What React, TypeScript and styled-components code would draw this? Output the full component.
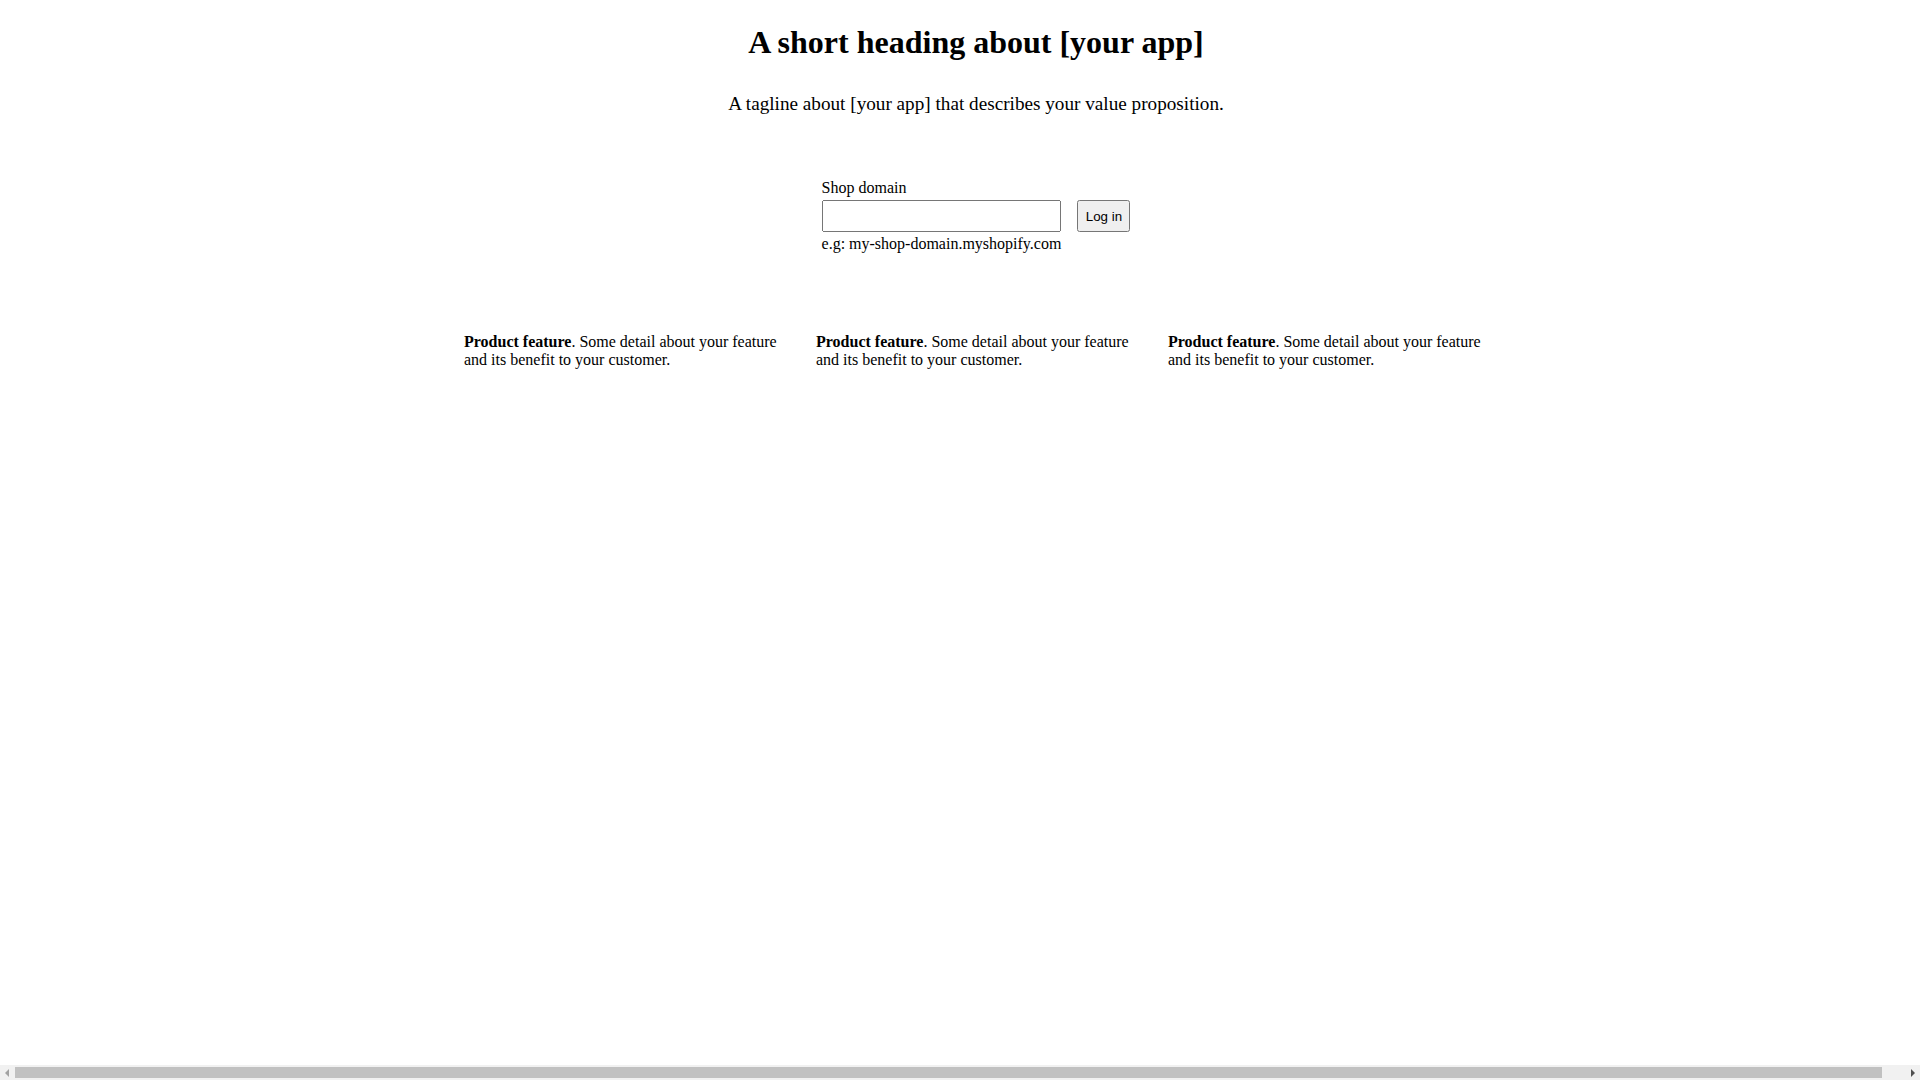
import * as React from 'react';
import styled, { createGlobalStyle } from 'styled-components';

const GlobalStyle = createGlobalStyle`
  body {
    margin: 8px;
    font-family: "Liberation Serif", "Times New Roman", serif;
    font-size: 16px;
    color: #000;
    background: #fff;
  }
`;

const features = [
  'Some detail about your feature and its benefit to your customer.',
  'Some detail about your feature and its benefit to your customer.',
  'Some detail about your feature and its benefit to your customer.',
];

export default function App() {
  return (
    <>
      <GlobalStyle />
      <Index>
        <Content>
          <Heading>A short heading about [your app]</Heading>
          <Tagline>A tagline about [your app] that describes your value proposition.</Tagline>
          <LoginForm method="post" action="/auth/login" onSubmit={(e) => e.preventDefault()}>
            <Label>
              <span>Shop domain</span>
              <Input type="text" name="shop" />
              <span>e.g: my-shop-domain.myshopify.com</span>
            </Label>
            <Button type="submit">Log in</Button>
          </LoginForm>
          <FeatureList>
            {features.map((text, i) => (
              <Feature key={i}>
                <strong>Product feature</strong>. {text}
              </Feature>
            ))}
          </FeatureList>
        </Content>
      </Index>
      {/* horizontal scrollbar as seen in the screenshot */}
      <ScrollBar aria-hidden>
        <Arrow $dir="left" />
        <Track>
          <Thumb />
        </Track>
        <Arrow $dir="right" />
      </ScrollBar>
    </>
  );
}

const Index = styled.div`
  display: flex;
  align-items: center;
  justify-content: center;
  width: 100%;
  padding: 1rem;
  text-align: center;
`;

const Content = styled.div`
  display: grid;
  gap: 2rem;
`;

const Heading = styled.h1`
  margin: 0;
  padding: 0;
  font-size: 32px;
  font-weight: bold;
`;

const Tagline = styled.p`
  margin: 0;
  padding: 0 0 2rem;
  font-size: 1.2rem;
`;

const LoginForm = styled.form`
  display: flex;
  align-items: center;
  justify-content: flex-start;
  margin: 0 auto;
  gap: 1rem;
`;

const Label = styled.label`
  display: grid;
  gap: 0.2rem;
  max-width: 20rem;
  text-align: left;
  font-size: 1rem;
`;

const Input = styled.input`
  font: 13.333px "Liberation Sans", Arial, sans-serif;
  padding: 0.4rem;
`;

const Button = styled.button`
  font: 13.333px "Liberation Sans", Arial, sans-serif;
  padding: 0.4rem;
`;

const FeatureList = styled.ul`
  list-style: none;
  margin: 0;
  padding: 3rem 0 0;
  display: flex;
  gap: 2rem;
`;

const Feature = styled.li`
  max-width: 20rem;
  text-align: left;
`;

const ScrollBar = styled.div`
  position: fixed;
  left: 0;
  right: 0;
  bottom: 0;
  height: 15px;
  display: flex;
  align-items: center;
  background: #f1f1f1;
`;

const Track = styled.div`
  flex: 1;
  height: 100%;
  padding: 2px 23px 2px 0;
  box-sizing: border-box;
`;

const Thumb = styled.div`
  height: 100%;
  background: #c1c1c1;
`;

const Arrow = styled.div<{ $dir: 'left' | 'right' }>`
  width: 15px;
  height: 15px;
  position: relative;
  flex: none;

  &::after {
    content: '';
    position: absolute;
    top: 4px;
    ${(p) => (p.$dir === 'left' ? 'left: 5px;' : 'left: 6px;')}
    border-top: 4px solid transparent;
    border-bottom: 4px solid transparent;
    ${(p) =>
      p.$dir === 'left'
        ? 'border-right: 4px solid #a3a3a3;'
        : 'border-left: 4px solid #505050;'}
  }
`;
